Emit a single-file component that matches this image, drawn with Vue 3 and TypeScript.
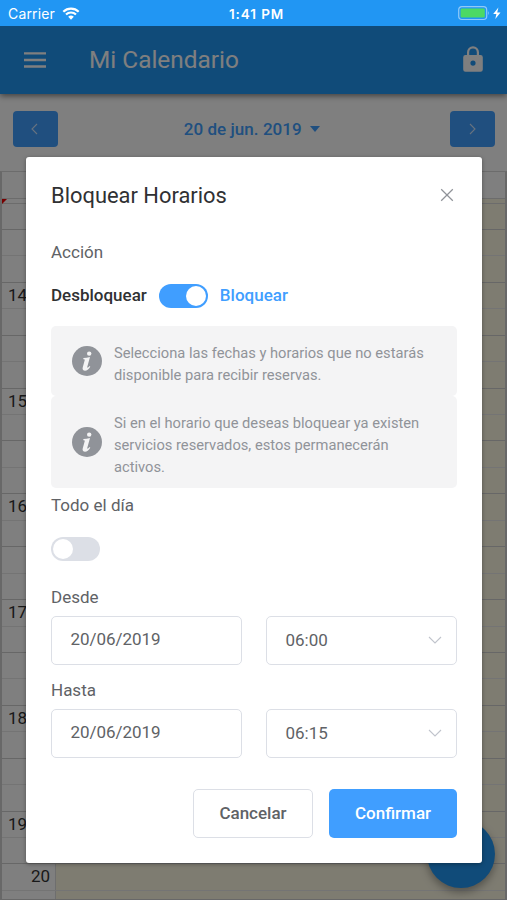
<script setup lang="ts">
import { ref } from 'vue'

interface Slot {
  id: number
  label: string
  last: boolean
  major: boolean
}

const hourLabels: Record<number, string> = { 3: '14', 7: '15', 11: '16', 15: '17', 19: '18', 23: '19', 25: '20' }
const slots: Slot[] = Array.from({ length: 27 }, (_, i) => ({
  id: i,
  label: hourLabels[i] ?? '',
  last: i === 25,
  major: i % 2 === 0,
}))

const notices: string[][] = [
  ['Selecciona las fechas y horarios que no estarás', 'disponible para recibir reservas.'],
  ['Si en el horario que deseas bloquear ya existen', 'servicios reservados, estos permanecerán', 'activos.'],
]

const ranges = [
  { label: 'Desde', date: '20/06/2019', time: '06:00' },
  { label: 'Hasta', date: '20/06/2019', time: '06:15' },
]

const block = ref(true)
const allDay = ref(false)
</script>

<template>
  <div class="screen">
    <header class="status">
      <span class="carrier">Carrier</span>
      <svg class="wifi" viewBox="0 0 18 13" width="18" height="13">
        <path d="M1.3 4.7a11.1 11.1 0 0 1 15.4 0M4 7.5a7.2 7.2 0 0 1 10 0" fill="none" stroke="#fff" stroke-width="2.2" />
        <path d="M6.2 9.8a4 4 0 0 1 5.6 0L9 12.7z" fill="#fff" />
      </svg>
      <span class="clock">1:41 PM</span>
      <svg class="battery" viewBox="0 0 44 15" width="44" height="15">
        <rect x=".7" y=".7" width="28" height="12.8" rx="3.2" fill="none" stroke="#8fcaf9" stroke-width="1.2" />
        <rect x="2.6" y="2.6" width="24.2" height="9" rx="1.4" fill="#4cd964" />
        <path d="M30.2 5q1.7 2.1 0 4.2z" fill="#8fcaf9" />
        <path d="M40.4 1.4l-5.2 6.5h3.2l-1.1 5.2 5.2-6.7h-3.3z" fill="#fff" />
      </svg>
    </header>

    <nav class="toolbar">
      <svg class="menu" viewBox="0 0 24 20" width="24" height="20">
        <path d="M1 3.4h22M1 10h22M1 16.5h22" stroke="#fff" stroke-width="2.3" />
      </svg>
      <h1>Mi Calendario</h1>
      <svg class="lock" viewBox="0 0 20 26" width="20" height="26">
        <path fill-rule="evenodd" fill="#fff" d="M17.5 9H16V6.2a6 6 0 0 0-12 0V9H2.5A2.3 2.3 0 0 0 .2 11.3v12.2a2.3 2.3 0 0 0 2.3 2.3h15a2.3 2.3 0 0 0 2.3-2.3V11.3A2.3 2.3 0 0 0 17.5 9zM6.2 9V6.3a3.8 3.8 0 0 1 7.6 0V9zM10 14.5a2.6 2.6 0 1 1 0 5.2 2.6 2.6 0 0 1 0-5.2z" />
      </svg>
    </nav>

    <main class="calendar">
      <div class="picker">
        <button class="step">
          <svg viewBox="0 0 12 14" width="12" height="14"><path d="M8 2L3 7l5 5" fill="none" stroke="#cfe5ff" stroke-width="1.1" /></svg>
        </button>
        <span class="day">20 de jun. 2019 <i class="caret"></i></span>
        <button class="step">
          <svg viewBox="0 0 12 14" width="12" height="14"><path d="M4 2l5 5-5 5" fill="none" stroke="#cfe5ff" stroke-width="1.1" /></svg>
        </button>
      </div>
      <div class="grid">
        <div class="grid-head"></div>
        <div class="now-row"><i class="now"></i></div>
        <div v-for="s in slots" :key="s.id" class="slot" :class="{ major: s.major }">
          <span class="hour" :class="{ end: s.last }">{{ s.label }}</span>
          <span class="cell"></span>
        </div>
      </div>
    </main>
    <div class="fab"></div>

    <div class="overlay">
      <section class="dialog">
        <div class="heading">
          <h2>Bloquear Horarios</h2>
          <svg class="close" viewBox="0 0 14 14" width="14" height="14">
            <path d="M1.2 1.2l11.6 11.6M12.8 1.2L1.2 12.8" stroke="#909399" stroke-width="1.25" />
          </svg>
        </div>
        <p class="label action">Acción</p>
        <div class="choice">
          <span class="off-text">Desbloquear</span>
          <button class="switch" :class="{ on: block }" @click="block = !block"><i></i></button>
          <span class="on-text">Bloquear</span>
        </div>
        <div v-for="(lines, n) in notices" :key="n" class="notice">
          <svg viewBox="0 0 30 30" width="30" height="30">
            <circle cx="15" cy="15" r="15" fill="#909399" />
            <circle cx="17.2" cy="7.6" r="2.2" fill="#f4f4f5" />
            <path d="M11.4 12c2.2-.2 4.3-.6 6.6-1.1l-2.7 9.9c-.3 1.3.5 1.4 2.3-.7l.7.6c-1.7 2.6-3.4 4-5.2 4-2 0-2.9-1.4-2.4-3.2l2-7.3c.2-.8-.2-1-1.4-1z" fill="#f4f4f5" />
          </svg>
          <p><span v-for="line in lines" :key="line">{{ line }}</span></p>
        </div>
        <p class="label whole">Todo el día</p>
        <button class="switch" :class="{ on: allDay }" @click="allDay = !allDay"><i></i></button>
        <div v-for="r in ranges" :key="r.label" class="range">
          <p class="label">{{ r.label }}</p>
          <div class="fields">
            <div class="field date">{{ r.date }}</div>
            <div class="field">
              <span>{{ r.time }}</span>
              <svg viewBox="0 0 14 8" width="14" height="8"><path d="M1 1l6 6 6-6" fill="none" stroke="#c0c4cc" stroke-width="1.1" /></svg>
            </div>
          </div>
        </div>
        <footer class="actions">
          <button class="btn cancel">Cancelar</button>
          <button class="btn confirm">Confirmar</button>
        </footer>
      </section>
    </div>
  </div>
</template>

<style>
body { margin: 0; overflow: hidden; }
</style>

<style scoped>
* { box-sizing: border-box; }
h1, h2, p { margin: 0; font-weight: 400; }
button { border: 0; padding: 0; font: inherit; display: flex; align-items: center; justify-content: center; }
svg { display: block; flex: none; }
.screen {
  position: relative;
  width: 507px;
  height: 900px;
  overflow: hidden;
  background: #fff;
  font-family: Roboto, "Liberation Sans", sans-serif;
  display: flex;
  flex-direction: column;
}
.status {
  height: 25.5px;
  flex: none;
  position: relative;
  z-index: 3;
  display: grid;
  grid-template-columns: 54px 160px 1fr 49px;
  align-items: center;
  background: #2196f3;
  color: #fff;
  font-family: Inter, sans-serif;
  font-size: 14px;
  padding: 2px 0 0 8px;
}
.carrier { letter-spacing: .15px; }
.clock { font-weight: 600; font-size: 13.5px; padding-left: 7px; letter-spacing: .9px; white-space: nowrap; }
.toolbar {
  height: 68.5px;
  flex: none;
  z-index: 1;
  background: #2196f3;
  box-shadow: 0 2px 6px rgba(0, 0, 0, .5);
  display: flex;
  align-items: center;
  padding: 0 24px 0 23px;
  color: #fff;
}
.lock { margin-bottom: 2px; }
h1 { margin-left: 42px; font-size: 24.4px; line-height: 30px; flex: 1; }
.calendar { flex: 1; min-height: 0; display: flex; flex-direction: column; }
.picker {
  height: 77px;
  flex: none;
  padding: 17px 12.5px 0 13px;
  display: flex;
  justify-content: space-between;
  align-items: flex-start;
}
.step { width: 44.5px; height: 36px; border-radius: 4px; background: #409eff; }
.day { display: flex; align-items: center; gap: 8px; height: 35px; padding-right: 4px; color: #409eff; font-weight: 500; font-size: 17px; letter-spacing: .05px; white-space: nowrap; }
.caret { border: 5px solid transparent; border-top: 6px solid #409eff; border-bottom: 0; }
.grid { flex: 1; min-height: 0; overflow: hidden; border: 2px solid #d0d0d0; border-top: 1px solid #d8d8d8; border-bottom-width: 1px; }
.grid-head { height: 26px; }
.now-row { height: 5.5px; border-bottom: 1px solid #d8d8d8; border-top: 1px solid #d8d8d8; background: linear-gradient(90deg, #fff 54px, #fcf8e3 54px); }
.now { display: block; width: 0; height: 0; border-top: 5px solid #e00; border-right: 5px solid transparent; }
.slot { height: 26.45px; display: flex; border-bottom: 1px solid #e9e9e9; }
.slot.major { border-bottom-color: #cfcfcf; }
.hour { width: 54px; flex: none; padding-left: 6px; color: #333; font-size: 17px; line-height: 25px; border-right: 1px solid #ddd; }
.hour.end { text-align: right; padding-right: 5px; }
.cell { flex: 1; background: #fcf8e3; }
.fab { position: absolute; left: 427px; top: 820px; width: 68px; height: 68px; border-radius: 50%; background: #2196f3; box-shadow: 0 4px 9px rgba(0, 0, 0, .35); }
.overlay { position: absolute; inset: 25.5px 0 0; z-index: 2; padding: 131px 25.5px 0 26px; background: rgba(0, 0, 0, .5); }
.dialog {
  height: 706px;
  padding: 24px 24.5px 24.5px 25px;
  background: #fff;
  border-radius: 3px;
  box-shadow: 0 1px 4px rgba(0, 0, 0, .35);
  color: #606266;
  display: flex;
  flex-direction: column;
}
.heading { height: 30px; display: flex; justify-content: space-between; align-items: flex-start; padding-right: 3px; }
.close { margin-top: 7px; }
h2 { color: #303133; font-size: 21.9px; line-height: 30px; }
.label { font-size: 17px; line-height: 22px; }
.action { margin-top: 30px; }
.choice { height: 24px; margin: 21px 0 18.5px; display: flex; align-items: center; gap: 12px; font-size: 17px; font-weight: 500; }
.choice span { margin-bottom: 1px; }
.off-text { color: #303133; }
.on-text { color: #409eff; }
.switch { width: 49px; height: 24px; flex: none; padding: 2px; border-radius: 12px; background: #dcdfe6; justify-content: flex-start; }
.switch i { width: 20px; height: 20px; border-radius: 50%; background: #fff; }
.switch.on { background: #409eff; justify-content: flex-end; }
.notice { background: #f4f4f5; border-radius: 5px; padding: 0 0 0 21px; display: flex; align-items: center; gap: 12px; flex: none; height: 69.5px; }
.notice p { display: flex; flex-direction: column; color: #909399; font-size: 14.7px; line-height: 22px; white-space: nowrap; padding-top: 7px; }
.notice + .notice { height: 92px; }
.whole { margin: 6px 0 21px; }
.switch + .range { margin-top: 25px; }
.fields { display: flex; gap: 24px; margin-top: 8px; }
.field { flex: 1; height: 49px; border: 1px solid #dcdfe6; border-radius: 5px; padding: 0 14px 0 18.5px; display: flex; align-items: center; justify-content: space-between; font-size: 17px; }
.date { padding-bottom: 3px; letter-spacing: -.05px; }
.range + .range { margin-top: 14px; }
.actions { margin-top: auto; display: flex; justify-content: flex-end; gap: 16px; }
.btn { height: 49px; border-radius: 5px; font-size: 17px; font-weight: 500; padding-bottom: 2px; }
.cancel { width: 120px; border: 1px solid #dcdfe6; background: #fff; color: #606266; }
.confirm { width: 128px; background: #409eff; color: #fff; }
</style>
